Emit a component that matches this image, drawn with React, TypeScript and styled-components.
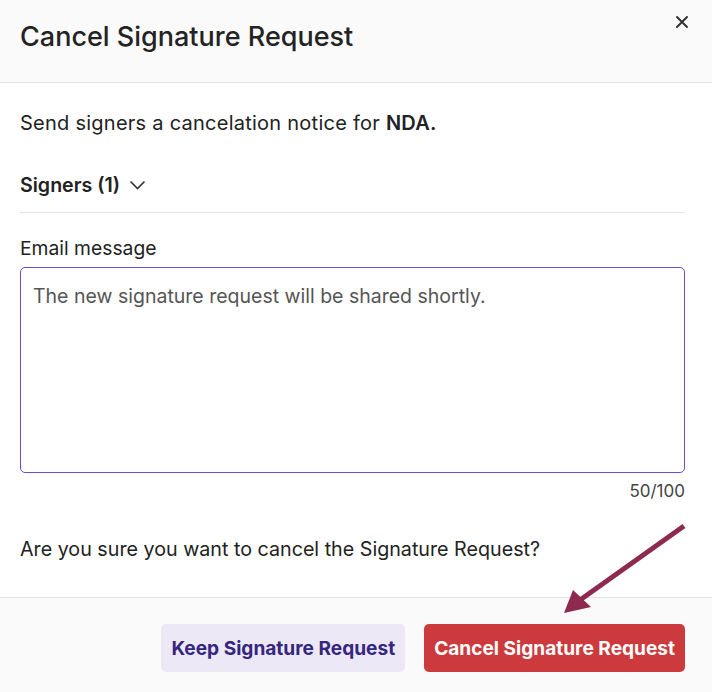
import styled, { createGlobalStyle } from "styled-components";

const Global = createGlobalStyle`
  html, body { margin: 0; padding: 0; background: #fff; }
  body { font-family: Inter, "Noto Sans", Arial, sans-serif; color: #1f1f1f; }
  * { box-sizing: border-box; }
`;

const Modal = styled.div`
  position: relative;
  width: 712px;
  height: 692px;
  display: flex;
  flex-direction: column;
  background: #fff;
  overflow: hidden;
`;

const Header = styled.header`
  height: 83px;
  flex: none;
  background: #fafafa;
  border-bottom: 1px solid #e2e2e4;
  padding: 20px 20px 0 20px;
  display: flex;
  justify-content: space-between;
  align-items: flex-start;
`;

const Title = styled.h1`
  margin: 0;
  font-size: 27px;
  line-height: 34px;
  font-weight: 500;
  color: #232323;
`;

const Close = styled.button`
  border: 0;
  background: none;
  padding: 0;
  margin: -10px -2px 0 0;
  width: 24px;
  height: 24px;
  display: flex;
  align-items: center;
  justify-content: center;
  color: #333;
  cursor: pointer;
`;

const Body = styled.div`
  flex: 1;
  padding: 28px 27px 36px 20px;
  display: flex;
  flex-direction: column;
`;

const Text = styled.p<{ $size?: number }>`
  margin: 0;
  font-size: ${(p) => p.$size ?? 20}px;
  line-height: 24px;
  color: #222;
  b { font-weight: 600; }
`;

const Notice = styled(Text)`
  letter-spacing: 0.25px;
`;

const SignersRow = styled.div`
  margin-top: 38px;
  padding-bottom: 15px;
  border-bottom: 1px solid #e2e2e6;
  display: flex;
  align-items: center;
  gap: 9px;
  font-size: 19.6px;
  line-height: 24px;
  font-weight: 600;
  color: #222;
`;

const Label = styled.label`
  margin-top: 23px;
  font-size: 19.3px;
  line-height: 24px;
  color: #222;
`;

const Area = styled.textarea`
  margin-top: 7px;
  width: 100%;
  height: 206px;
  border: 1px solid #6a4dcc;
  border-radius: 5px;
  padding: 16px 12px;
  font-family: inherit;
  font-size: 19.5px;
  line-height: 24px;
  color: #555;
  resize: none;
  outline: none;
`;

const Counter = styled.div`
  margin-top: 6px;
  text-align: right;
  font-size: 17px;
  line-height: 24px;
  color: #444;
`;

const Question = styled(Text)`
  margin-top: 34px;
`;

const Footer = styled.footer`
  height: 96px;
  flex: none;
  background: #fafafa;
  border-top: 1px solid #e2e2e4;
  padding: 26px 27px 0 20px;
  display: flex;
  justify-content: flex-end;
  align-items: flex-start;
  gap: 19px;
`;

const Button = styled.button<{ $danger?: boolean }>`
  height: 48px;
  padding: 0 10px;
  border: 0;
  border-radius: 5px;
  font-family: inherit;
  font-size: 19.1px;
  font-weight: 700;
  background: ${(p) => (p.$danger ? "#cc3a3e" : "#ece8f5")};
  color: ${(p) => (p.$danger ? "#fff" : "#35277f")};
  cursor: pointer;
`;

const Arrow = styled.svg`
  position: absolute;
  left: 0;
  top: 0;
  pointer-events: none;
`;

export default function App() {
  return (
    <>
      <Global />
      <Modal>
        <Header>
          <Title>Cancel Signature Request</Title>
          <Close aria-label="Close">
            <svg width="14" height="14" viewBox="0 0 14 14">
              <path d="M2 2L12 12M12 2L2 12" stroke="#333" strokeWidth="2" strokeLinecap="round" />
            </svg>
          </Close>
        </Header>
        <Body>
          <Notice>
            Send signers a cancelation notice for <b>NDA.</b>
          </Notice>
          <SignersRow>
            Signers (1)
            <svg width="17" height="10" viewBox="0 0 17 10">
              <path d="M1.5 1.5L8.5 8.5L15.5 1.5" fill="none" stroke="#333" strokeWidth="1.6" />
            </svg>
          </SignersRow>
          <Label>Email message</Label>
          <Area defaultValue="The new signature request will be shared shortly." />
          <Counter>50/100</Counter>
          <Question $size={19.7}>Are you sure you want to cancel the Signature Request?</Question>
        </Body>
        <Footer>
          <Button>Keep Signature Request</Button>
          <Button $danger>Cancel Signature Request</Button>
        </Footer>
        <Arrow width="712" height="692" viewBox="0 0 712 692">
          <line x1="684" y1="526" x2="580" y2="600" stroke="#8c2a4f" strokeWidth="5" />
          <polygon points="564,613 573,590 591,607" fill="#8c2a4f" />
        </Arrow>
      </Modal>
    </>
  );
}
